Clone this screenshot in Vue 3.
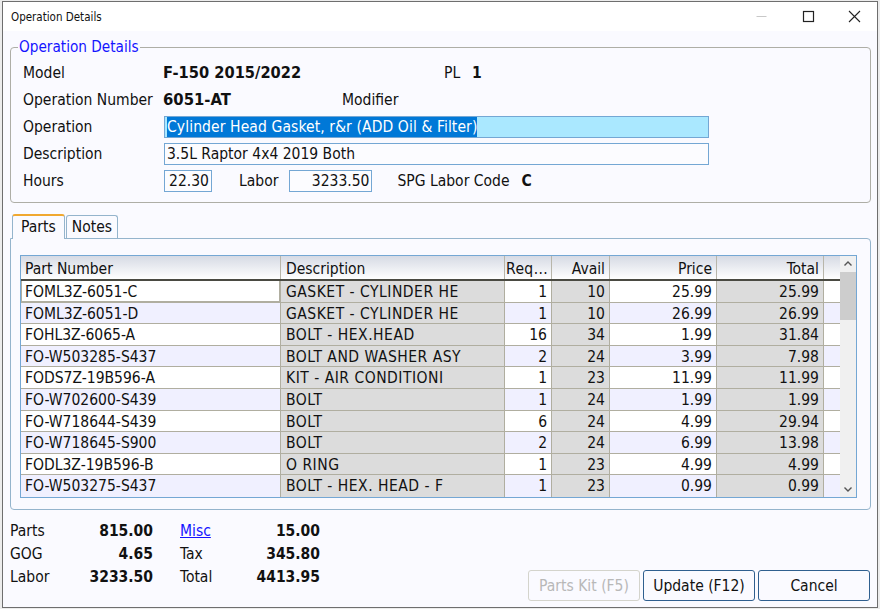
<template>
  <div class="screen">
    <div class="window">
      <div class="titlebar">
        <span class="title">Operation Details</span>
        <div class="controls">
          <svg class="ctl" width="46" height="29" viewBox="0 0 46 29"><path d="M17.5 14.5h10" stroke="#c8c8c8" fill="none" /></svg>
          <svg class="ctl" width="46" height="29" viewBox="0 0 46 29"><rect x="18.5" y="9.5" width="10" height="10" stroke="#222" stroke-width="1.2" fill="none" /></svg>
          <svg class="ctl" width="46" height="29" viewBox="0 0 46 29"><path d="M18 9l11 11M29 9l-11 11" stroke="#222" stroke-width="1.1" fill="none" /></svg>
        </div>
      </div>

      <div class="content">
        <fieldset class="group">
          <legend>Operation Details</legend>
          <div class="row">
            <span class="lbl">Model</span>
            <b class="val model">F-150 2015/2022</b>
            <span class="pl">PL</span>
            <b class="val">1</b>
          </div>
          <div class="row">
            <span class="lbl">Operation Number</span>
            <b class="val opnum">6051-AT</b>
            <span>Modifier</span>
          </div>
          <div class="row">
            <span class="lbl">Operation</span>
            <div class="field wide focused"><span class="sel">Cylinder Head Gasket, r&amp;r (ADD Oil &amp; Filter)</span></div>
          </div>
          <div class="row">
            <span class="lbl">Description</span>
            <div class="field wide">3.5L Raptor 4x4 2019 Both</div>
          </div>
          <div class="row">
            <span class="lbl">Hours</span>
            <div class="field num hours">22.30</div>
            <span class="labor-lbl">Labor</span>
            <div class="field num labor">3233.50</div>
            <span class="spg">SPG Labor Code</span>
            <b class="val">C</b>
          </div>
        </fieldset>

        <div class="tabs">
          <div class="tab active">Parts</div>
          <div class="tab">Notes</div>
        </div>
        <div class="tabpanel">
          <div class="grid">
            <div class="table">
              <div class="line head">
                <div v-for="(c, i) in headers" :key="c" class="hcell" :class="{ right: i > 1, desc: i == 1, req: i == 2 }">{{ c }}</div>
                <div class="filler"></div>
              </div>
              <div v-for="(p, i) in parts" :key="p[0]" class="line" :class="{ alt: i % 2 == 1 }">
                <div class="cell" :class="{ current: i == 0 }">{{ p[0] }}</div>
                <div class="cell ro desc caps">{{ p[1] }}</div>
                <div class="cell right">{{ p[2] }}</div>
                <div class="cell ro right">{{ p[3] }}</div>
                <div class="cell right">{{ p[4] }}</div>
                <div class="cell ro right">{{ p[5] }}</div>
                <div class="filler"></div>
              </div>
            </div>
            <div class="scrollbar">
              <svg width="16" height="16" viewBox="0 0 16 16"><path d="M4.5 9.5l3.5-3.5 3.5 3.5" stroke="#555" stroke-width="1.4" fill="none" /></svg>
              <div class="track"><div class="thumb"></div></div>
              <svg width="16" height="16" viewBox="0 0 16 16"><path d="M4.5 6.5l3.5 3.5 3.5-3.5" stroke="#555" stroke-width="1.4" fill="none" /></svg>
            </div>
          </div>
        </div>

        <div class="footer">
          <div class="totals">
            <span>Parts</span><b>815.00</b><a class="misc">Misc</a><b>15.00</b>
            <span>GOG</span><b>4.65</b><span>Tax</span><b>345.80</b>
            <span>Labor</span><b>3233.50</b><span>Total</span><b>4413.95</b>
          </div>
          <div class="buttons">
            <button class="btn" disabled>Parts Kit (F5)</button>
            <button class="btn">Update (F12)</button>
            <button class="btn">Cancel</button>
          </div>
        </div>
      </div>
    </div>
  </div>
</template>

<script setup>
  const headers = ["Part Number", "Description", "Req...", "Avail", "Price", "Total"];

  const parts = [
    ["FOML3Z-6051-C", "GASKET - CYLINDER HE", "1", "10", "25.99", "25.99"],
    ["FOML3Z-6051-D", "GASKET - CYLINDER HE", "1", "10", "26.99", "26.99"],
    ["FOHL3Z-6065-A", "BOLT - HEX.HEAD", "16", "34", "1.99", "31.84"],
    ["FO-W503285-S437", "BOLT AND WASHER ASY", "2", "24", "3.99", "7.98"],
    ["FODS7Z-19B596-A", "KIT - AIR CONDITIONI", "1", "23", "11.99", "11.99"],
    ["FO-W702600-S439", "BOLT", "1", "24", "1.99", "1.99"],
    ["FO-W718644-S439", "BOLT", "6", "24", "4.99", "29.94"],
    ["FO-W718645-S900", "BOLT", "2", "24", "6.99", "13.98"],
    ["FODL3Z-19B596-B", "O RING", "1", "23", "4.99", "4.99"],
    ["FO-W503275-S437", "BOLT - HEX. HEAD - F", "1", "23", "0.99", "0.99"],
  ];
</script>

<style>
html, body {
  margin: 0;
  background: #ececec;
}
</style>

<style scoped>
.screen {
  width: 880px;
  height: 609px;
  box-sizing: border-box;
  padding: 1px 2px 1px 2px;
  font-family: "DejaVu Sans Condensed", "DejaVu Sans", sans-serif;
  font-size: 15.5px;
  color: #111;
}

.window {
  height: 100%;
  box-sizing: border-box;
  border: 1px solid #6e6e6e;
  background: #fafaff;
  display: flex;
  flex-direction: column;
}

.titlebar {
  height: 29px;
  flex: none;
  background: #fff;
  display: flex;
  align-items: center;
  justify-content: space-between;
  padding-left: 8px;
}

.title {
  font-size: 11.5px;
}

.controls {
  display: flex;
}

.content {
  flex: 1;
  padding: 8px 6px 0 7px;
}

.group {
  margin: 0;
  height: 164px;
  box-sizing: border-box;
  padding: 3px 0 0 12px;
  border: 1px solid #aeaea6;
  border-radius: 4px;
}

legend {
  color: #1414ff;
  padding: 0 1px;
  margin-left: -5px;
  line-height: 17px;
  font-size: 15.2px;
}

.row {
  height: 27px;
  display: flex;
  align-items: center;
}

.lbl {
  width: 140px;
  flex: none;
}

b {
  font-size: 15.5px;
}

.model {
  width: 281px;
  flex: none;
  font-size: 16.3px;
}

.pl {
  width: 28px;
  flex: none;
}

.opnum {
  width: 179px;
  flex: none;
  font-size: 16.5px;
}

.field {
  height: 22px;
  box-sizing: border-box;
  border: 1px solid #74a7d4;
  background: #fcfcff;
  line-height: 20px;
  padding: 0 2px;
  white-space: nowrap;
}

.wide {
  width: 545px;
  margin-left: 1px;
}

.focused {
  background: #aae8ff;
}

.sel {
  display: inline-block;
  background: #0078d7;
  color: #fff;
  height: 20px;
  letter-spacing: 0.1px;
}

.num {
  text-align: right;
}

.hours {
  width: 48px;
  margin-left: 1px;
}

.labor-lbl {
  margin: 0 11px 0 27px;
}

.labor {
  width: 83px;
}

.spg {
  margin: 0 12px 0 25px;
}

.tabs {
  display: flex;
  margin: 9px 0 0 2px;
  align-items: flex-end;
  height: 26px;
}

.tab {
  height: 23px;
  box-sizing: border-box;
  padding: 0 5px;
  line-height: 23px;
  border: 1px solid #94b4cc;
  border-bottom: none;
  border-radius: 3px 3px 0 0;
  background: #fafaff;
  margin-left: 1px;
}

.tab.active {
  height: 25px;
  padding: 0 8px;
  border-top: 2px solid #f0a830;
  position: relative;
  top: 1px;
  margin-left: 0;
  z-index: 1;
}

.tabpanel {
  height: 272px;
  box-sizing: border-box;
  border: 1px solid #94b4cc;
  border-radius: 0 4px 4px 4px;
  padding: 16px 13px 12px 9px;
}

.grid {
  height: 243px;
  box-sizing: border-box;
  border: 1px solid #74a7d4;
  display: flex;
}

.table {
  flex: 1;
  min-width: 0;
}

.line {
  display: grid;
  grid-template-columns: 260px 224px 47px 58px 107px 107px 1fr;
  height: 21.6px;
  background: #fff;
  box-sizing: border-box;
  border-bottom: 1px solid #b0aea0;
}

.line.alt {
  background: #f0f0ff;
}

.line:last-child {
  border-bottom: none;
}

.head {
  height: 25px;
  background: linear-gradient(#d6dae4, #ffffff);
  border-bottom: 2px solid #4a4a42;
}

.hcell {
  padding: 1px 4px 0;
  line-height: 24px;
  border-right: 1px solid #b8b6aa;
  white-space: nowrap;
  overflow: hidden;
}

.cell {
  padding: 1px 4px 0;
  line-height: 21px;
  border-right: 1px solid #b0aea0;
  white-space: nowrap;
  overflow: hidden;
}

.right {
  text-align: right;
}

.desc {
  padding-left: 5px;
}

.caps {
  letter-spacing: 0.5px;
}

.req {
  padding-left: 1px;
  text-align: left;
  letter-spacing: 0.4px;
}

.ro {
  background: #dcdcdc;
}

.current {
  box-shadow: inset -1px -1px 0 #b0aea0, inset 1px 0 0 #b0aea0;
}

.scrollbar {
  width: 16px;
  flex: none;
  background: #f0f0f0;
  display: flex;
  flex-direction: column;
}

.track {
  flex: 1;
}

.thumb {
  height: 48px;
  background: #cdcdcd;
}

.footer {
  display: flex;
  justify-content: space-between;
  align-items: flex-end;
  padding-top: 9px;
}

.totals {
  display: grid;
  grid-template-columns: 70px 73px 86px 81px;
  grid-auto-rows: 23px;
  align-items: center;
  margin-bottom: 14px;
}

.totals b {
  text-align: right;
}

.totals > span:nth-child(3), .misc, .totals > span:nth-child(7), .totals > span:nth-child(11) {
  padding-left: 27px;
}

.misc {
  color: #1414ff;
  text-decoration: underline;
}

.buttons {
  display: flex;
  gap: 3px;
  margin-bottom: 1px;
  padding-right: 1px;
}

.btn {
  width: 112px;
  height: 31px;
  font: inherit;
  color: #111;
  background: #fafaff;
  border: 1px solid #2f5f8f;
  border-radius: 3px;
  padding: 0;
}

.btn:disabled {
  color: #b8b8b8;
  border-color: #d4d4cc;
}
</style>
